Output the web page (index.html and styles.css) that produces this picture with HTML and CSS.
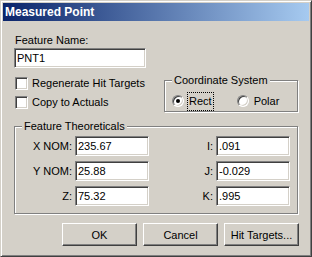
FILE: index.html
```html
<!DOCTYPE html>
<html lang="en">
<head>
    <meta charset="UTF-8">
    <meta name="viewport" content="width=device-width, initial-scale=1.0">
    <title>Measured Point</title>
    <link rel="stylesheet" href="styles.css">
</head>
<body>

    <div class="window">
        <div class="titlebar">Measured Point</div>

        <div class="content">
            <div class="label">Feature Name:</div>
            <input class="textbox name-box" type="text" value="PNT1">

            <!-- checkboxes on the left, coordinate system on the right -->
            <div class="options-row">
                <div class="checks">
                    <label class="check-row"><span class="checkbox"></span>Regenerate Hit Targets</label>
                    <label class="check-row"><span class="checkbox"></span>Copy to Actuals</label>
                </div>
                <div class="group coord-group">
                    <span class="group-title">Coordinate System</span>
                    <div class="radio-row">
                        <span class="radio checked"></span><span class="radio-text focused">Rect</span>
                        <span class="radio polar"></span><span class="radio-text">Polar</span>
                    </div>
                </div>
            </div>

            <!-- nominal values -->
            <div class="group theo-group">
                <span class="group-title">Feature Theoreticals</span>
                <div class="field-row">
                    <span class="field-label left-label">X NOM:</span>
                    <input class="textbox num-box" type="text" value="235.67">
                    <span class="field-label right-label">I:</span>
                    <input class="textbox num-box" type="text" value=".091">
                </div>
                <div class="field-row">
                    <span class="field-label left-label">Y NOM:</span>
                    <input class="textbox num-box" type="text" value="25.88">
                    <span class="field-label right-label">J:</span>
                    <input class="textbox num-box" type="text" value="-0.029">
                </div>
                <div class="field-row">
                    <span class="field-label left-label">Z:</span>
                    <input class="textbox num-box" type="text" value="75.32">
                    <span class="field-label right-label">K:</span>
                    <input class="textbox num-box" type="text" value=".995">
                </div>
            </div>

            <div class="buttons">
                <button class="button">OK</button>
                <button class="button">Cancel</button>
                <button class="button">Hit Targets...</button>
            </div>
        </div>
    </div>

</body>
</html>
```

FILE: styles.css
```css
body {
    margin: 0;
    background-color: #d4d0c8;
    font-family: "Liberation Sans", Arial, sans-serif;
    font-size: 11px;
    line-height: 13px;
    color: #000;
}
.window {
    box-sizing: border-box;
    width: 312px;
    height: 257px;
    padding: 2px;
    background-color: #d4d0c8;
    border: 1px solid;
    border-color: #d4d0c8 #404040 #404040 #d4d0c8;
    box-shadow: inset 1px 1px #fff, inset -1px -1px #808080;
}
.titlebar {
    height: 18px;
    line-height: 18px;
    padding-left: 2px;
    font-size: 12px;
    font-weight: bold;
    color: #fff;
    background: linear-gradient(to right, #0a246a, #a6caf0);
}
.content {
    padding: 0 11px;
}
.label {
    margin-top: 13px;
    margin-bottom: 1px;
    padding-left: 1px;
}

/* sunken edit boxes */
.textbox {
    box-sizing: border-box;
    display: block;
    height: 20px;
    margin: 0;
    padding: 0 2px;
    font-family: inherit;
    font-size: 11px;
    color: #000;
    background-color: #fff;
    border: 1px solid;
    border-color: #808080 #fff #fff #808080;
    box-shadow: inset 1px 1px #404040, inset -1px -1px #d4d0c8;
    outline: none;
}
.name-box {
    width: 132px;
}
.num-box {
    width: 74px;
}

.options-row {
    display: flex;
    align-items: flex-start;
}
.checks {
    flex: 1;
    padding-top: 9px;
}
.check-row {
    display: flex;
    align-items: center;
    height: 13px;
    margin-bottom: 6px;
}
.checkbox {
    box-sizing: border-box;
    width: 13px;
    height: 13px;
    margin-left: 1px;
    margin-right: 4px;
    background-color: #fff;
    border: 1px solid;
    border-color: #808080 #fff #fff #808080;
    box-shadow: inset 1px 1px #404040, inset -1px -1px #d4d0c8;
}

/* etched group boxes */
.group {
    position: relative;
    box-sizing: border-box;
    border: 1px solid #808080;
    box-shadow: inset 1px 1px #fff, 1px 1px #fff;
}
.group-title {
    position: absolute;
    top: -7px;
    left: 7px;
    padding: 0 2px;
    background-color: #d4d0c8;
}
.coord-group {
    width: 134px;
    height: 32px;
    margin-top: 12px;
    padding: 14px 0 0 7px;
}
.radio-row {
    display: flex;
    align-items: center;
    height: 12px;
}
.radio {
    position: relative;
    box-sizing: border-box;
    width: 12px;
    height: 12px;
    margin-right: 3px;
    border-radius: 50%;
    background-color: #fff;
    border: 1px solid;
    border-color: #808080 #fff #fff #808080;
    box-shadow: inset 1px 1px #404040, inset -1px -1px #d4d0c8;
}
.radio.checked::after {
    content: "";
    position: absolute;
    left: 3px;
    top: 3px;
    width: 4px;
    height: 4px;
    border-radius: 50%;
    background-color: #000;
}
.radio.polar {
    margin-left: 23px;
}
.radio-text {
    padding: 2px 1px;
    border: 1px dotted transparent;
}
.radio-text.focused {
    border-color: #000;
}

.theo-group {
    height: 88px;
    margin-top: 11px;
    padding-top: 9px;
}
.field-row {
    display: flex;
    align-items: center;
    margin-bottom: 5px;
}
.field-label {
    text-align: right;
    margin-right: 3px;
}
.left-label {
    width: 57px;
}
.right-label {
    width: 64px;
}

.buttons {
    display: flex;
    justify-content: flex-end;
    gap: 6px;
    margin-top: 9px;
    margin-right: -1px;
}
.button {
    box-sizing: border-box;
    width: 75px;
    height: 23px;
    padding: 0;
    font-family: inherit;
    font-size: 11px;
    color: #000;
    background-color: #d4d0c8;
    border: 1px solid;
    border-color: #fff #404040 #404040 #fff;
    box-shadow: inset -1px -1px #808080;
}
```
